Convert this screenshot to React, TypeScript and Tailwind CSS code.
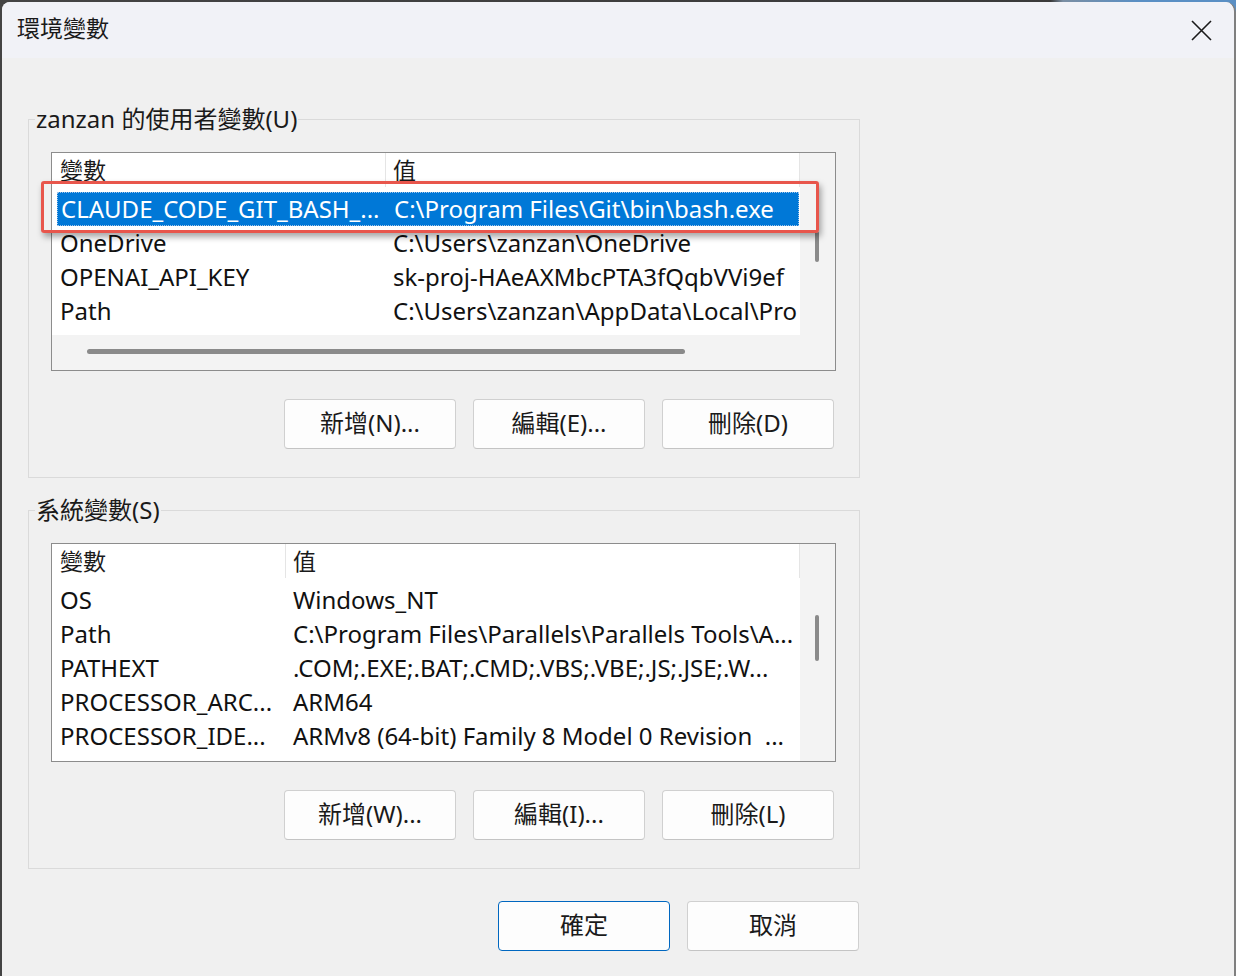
import React from "react";

type Row = { name: string; value: string; selected?: boolean };

const userRows: Row[] = [
  { name: "CLAUDE_CODE_GIT_BASH_...", value: "C:\\Program Files\\Git\\bin\\bash.exe", selected: true },
  { name: "OneDrive", value: "C:\\Users\\zanzan\\OneDrive" },
  { name: "OPENAI_API_KEY", value: "sk-proj-HAeAXMbcPTA3fQqbVVi9ef" },
  { name: "Path", value: "C:\\Users\\zanzan\\AppData\\Local\\Pro" },
];

const sysRows: Row[] = [
  { name: "OS", value: "Windows_NT" },
  { name: "Path", value: "C:\\Program Files\\Parallels\\Parallels Tools\\A..." },
  { name: "PATHEXT", value: ".COM;.EXE;.BAT;.CMD;.VBS;.VBE;.JS;.JSE;.W..." },
  { name: "PROCESSOR_ARC...", value: "ARM64" },
  { name: "PROCESSOR_IDE...", value: "ARMv8 (64-bit) Family 8 Model 0 Revision  ..." },
];

function ListView({
  rows,
  wide,
  hScroll,
  thumbTop,
  thumbH,
}: {
  rows: Row[];
  wide: boolean;
  hScroll: boolean;
  thumbTop: string;
  thumbH: string;
}) {
  const headerCol = wide ? "w-[334px]" : "w-[234px]";
  const rowCol = wide ? "w-[329px]" : "w-[229px]";
  return (
    <div className="w-[785px] h-[219px] border border-[#8c8c8c] bg-white flex">
      <div className="w-[748px] flex flex-col">
        <div className={`w-[748px] ${hScroll ? "h-[182px]" : "h-[217px]"} overflow-hidden bg-white`}>
          <div className="h-[39px] flex text-[23px] text-[#1a1a1a]">
            <div className={`${headerCol} h-[34px] leading-[34px] pl-[8px] border-r border-[#e5e5e5] shrink-0`}>變數</div>
            <div className="flex-1 h-[34px] leading-[34px] pl-[7px] border-r border-[#e5e5e5]">值</div>
          </div>
          {rows.map((r, i) => (
            <div
              key={i}
              className={`ml-[5px] w-[742px] h-[34px] flex items-center whitespace-pre text-[24px] ${
                r.selected
                  ? "bg-[#0078d7] text-white border border-dotted border-[#9fc4ea]"
                  : "text-[#111]"
              }`}
            >
              <div className={`${rowCol} shrink-0 pl-[3px] overflow-hidden`}>{r.name}</div>
              <div className="pl-[7px] shrink-0">{r.value}</div>
            </div>
          ))}
        </div>
        {hScroll && (
          <div className="h-[35px] bg-[#f3f3f3] pl-[35px] pt-[14px]">
            <div className="w-[598px] h-[5px] rounded-full bg-[#8a8a8a]" />
          </div>
        )}
      </div>
      <div className={`w-[35px] bg-[#f3f3f3] pl-[15px] ${thumbTop}`}>
        <div className={`w-[4px] ${thumbH} rounded-full bg-[#8a8a8a]`} />
      </div>
    </div>
  );
}

function Btn({ label, primary }: { label: string; primary?: boolean }) {
  return (
    <button
      className={`w-[172px] h-[50px] rounded-[4px] bg-[#fdfdfd] text-[24px] text-[#1a1a1a] flex items-center justify-center pb-[2px] ${
        primary ? "border border-[#0067c0]" : "border border-[#d0d0d0] border-b-[#c4c4c4]"
      }`}
    >
      {label}
    </button>
  );
}

function Group({
  legend,
  children,
  buttons,
}: {
  legend: string;
  children: React.ReactNode;
  buttons: string[];
}) {
  return (
    <fieldset className="w-[832px] border border-[#dadada] pl-[22px] pr-[23px] pb-[28px]">
      <legend className="ml-[-16px] px-[1px] text-[24px] leading-[30px] text-[#1a1a1a]">{legend}</legend>
      <div className="pt-[18px]">
        {children}
        <div className="mt-[28px] flex justify-end gap-[17px] pr-[2px]">
          {buttons.map((b) => (
            <Btn key={b} label={b} />
          ))}
        </div>
      </div>
    </fieldset>
  );
}

export default function App() {
  return (
    <div className="relative w-[1236px] h-[976px] overflow-hidden bg-[linear-gradient(90deg,#444_0%,#3a3a3a_85%,#7a8ea3_86%,#5a8fc4_92%,#5a8fc4_100%)] font-['Noto_Sans','Noto_Sans_CJK_TC',sans-serif]">
      <div className="ml-[2px] mt-[2px] w-[1234px] h-[974px] rounded-tl-[8px] rounded-tr-[10px] border-r-2 border-[#7f7f7f] overflow-hidden flex flex-col bg-[#f0f0f0]">
        <div className="h-[56px] bg-[#f1f2f7] flex items-center justify-between pl-[15px] pr-[22px] shrink-0">
          <div className="text-[23px] text-[#1a1a1a] pb-[4px]">環境變數</div>
          <svg width="21" height="21" viewBox="0 0 21 21">
            <path d="M1 1 L20 20 M20 1 L1 20" stroke="#1a1a1a" strokeWidth="1.6" fill="none" />
          </svg>
        </div>
        <div className="pl-[26px] pt-[46px] flex flex-col">
          <Group legend="zanzan 的使用者變數(U)" buttons={["新增(N)...", "編輯(E)...", "刪除(D)"]}>
            <ListView rows={userRows} wide hScroll thumbTop="pt-[78px]" thumbH="h-[31px]" />
          </Group>
          <div className="mt-[17px]">
            <Group legend="系統變數(S)" buttons={["新增(W)...", "編輯(I)...", "刪除(L)"]}>
              <ListView rows={sysRows} wide={false} hScroll={false} thumbTop="pt-[71px]" thumbH="h-[46px]" />
            </Group>
          </div>
          <div className="w-[832px] mt-[32px] flex justify-end gap-[17px] pr-[1px]">
            <Btn label="確定" primary />
            <Btn label="取消" />
          </div>
        </div>
      </div>
      <div className="absolute left-[41px] top-[181px] w-[778px] h-[52px] border-[3px] border-[#e8564c] rounded-[3px] shadow-[2px_4px_6px_rgba(0,0,0,0.35)]" />
    </div>
  );
}
